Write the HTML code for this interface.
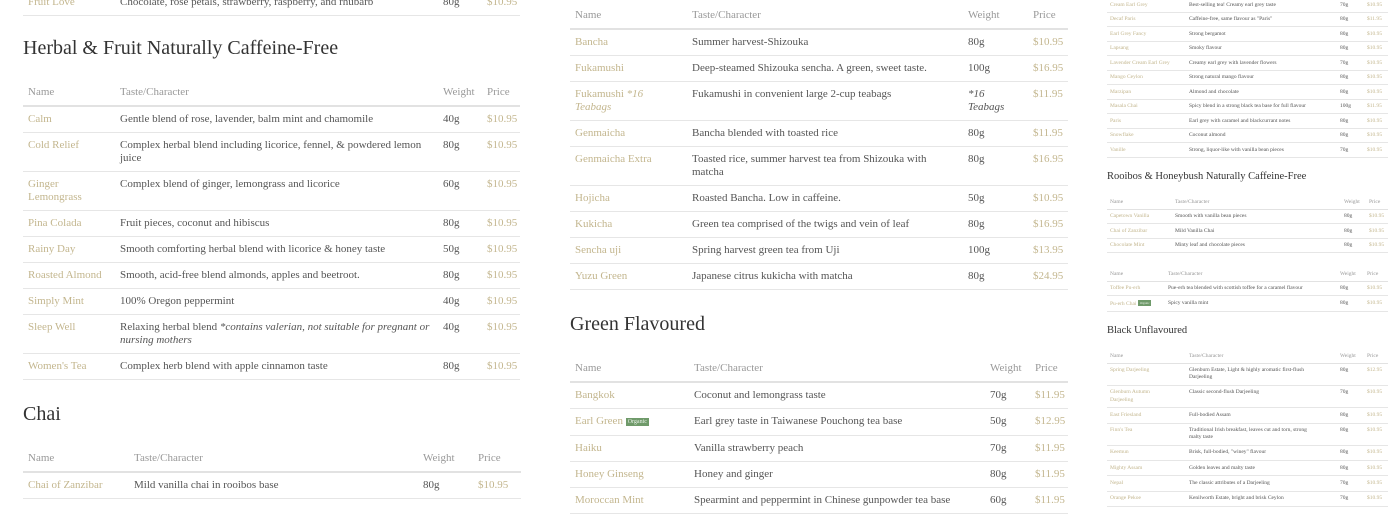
<!DOCTYPE html>
<html><head><meta charset="utf-8"><style>
*{margin:0;padding:0;box-sizing:border-box}
body{width:1400px;height:500px;overflow:hidden;background:#fff;font-family:"Liberation Serif",serif;color:#555;position:relative}
.t{position:absolute;border-collapse:collapse;table-layout:fixed;font-size:11px}
.t td,.t th{padding:6px 5px;line-height:13px;vertical-align:top;text-align:left;font-weight:normal;border-bottom:1px solid #e6e6e6;white-space:nowrap}
.t th{color:#999;border-bottom:2px solid #e2e2e2}
.t td.n,.t td.p{color:#c3b68e}
.h{position:absolute;font-size:20px;color:#333;font-weight:normal;white-space:nowrap}
.s{font-size:5.5px}
.s td,.s th{padding:3.5px 3px;line-height:6.5px;border-bottom-width:.5px}
.s th{border-bottom-width:1px}
.s2 td{line-height:7.2px}
.hs{font-size:10.5px}
.org{background:#6f9a6a;color:#e8f0e6;font-size:6px;padding:1px 2px;vertical-align:1px}
.s .org{font-size:3px}
</style></head><body>

<table class="t" style="left:23px;top:-10px;width:497px"><colgroup><col style="width:92px"><col style="width:323px"><col style="width:44px"><col style="width:38px"></colgroup>
<tr><td class="n">Fruit Love</td><td>Chocolate, rose petals, strawberry, raspberry, and rhubarb</td><td>80g</td><td class="p">$10.95</td></tr></table>

<div class="h" style="left:23px;top:37px">Herbal &amp; Fruit Naturally Caffeine-Free</div>
<table class="t" style="left:23px;top:80px;width:497px"><colgroup><col style="width:92px"><col style="width:323px"><col style="width:44px"><col style="width:38px"></colgroup>
<tr><th>Name</th><th>Taste/Character</th><th>Weight</th><th>Price</th></tr>
<tr><td class="n">Calm</td><td>Gentle blend of rose, lavender, balm mint and chamomile</td><td>40g</td><td class="p">$10.95</td></tr>
<tr><td class="n">Cold Relief</td><td>Complex herbal blend including licorice, fennel, &amp; powdered lemon<br>juice</td><td>80g</td><td class="p">$10.95</td></tr>
<tr><td class="n">Ginger<br>Lemongrass</td><td>Complex blend of ginger, lemongrass and licorice</td><td>60g</td><td class="p">$10.95</td></tr>
<tr><td class="n">Pina Colada</td><td>Fruit pieces, coconut and hibiscus</td><td>80g</td><td class="p">$10.95</td></tr>
<tr><td class="n">Rainy Day</td><td>Smooth comforting herbal blend with licorice &amp; honey taste</td><td>50g</td><td class="p">$10.95</td></tr>
<tr><td class="n">Roasted Almond</td><td>Smooth, acid-free blend almonds, apples and beetroot.</td><td>80g</td><td class="p">$10.95</td></tr>
<tr><td class="n">Simply Mint</td><td>100% Oregon peppermint</td><td>40g</td><td class="p">$10.95</td></tr>
<tr><td class="n">Sleep Well</td><td>Relaxing herbal blend <i>*contains valerian, not suitable for pregnant or<br>nursing mothers</i></td><td>40g</td><td class="p">$10.95</td></tr>
<tr><td class="n">Women's Tea</td><td>Complex herb blend with apple cinnamon taste</td><td>80g</td><td class="p">$10.95</td></tr>
</table>

<div class="h" style="left:23px;top:403px">Chai</div>
<table class="t" style="left:23px;top:446px;width:498px"><colgroup><col style="width:106px"><col style="width:289px"><col style="width:55px"><col style="width:48px"></colgroup>
<tr><th>Name</th><th>Taste/Character</th><th>Weight</th><th>Price</th></tr>
<tr><td class="n">Chai of Zanzibar</td><td>Mild vanilla chai in rooibos base</td><td>80g</td><td class="p">$10.95</td></tr>
</table>

<table class="t" style="left:570px;top:3px;width:498px"><colgroup><col style="width:117px"><col style="width:276px"><col style="width:65px"><col style="width:40px"></colgroup>
<tr><th>Name</th><th>Taste/Character</th><th>Weight</th><th>Price</th></tr>
<tr><td class="n">Bancha</td><td>Summer harvest-Shizouka</td><td>80g</td><td class="p">$10.95</td></tr>
<tr><td class="n">Fukamushi</td><td>Deep-steamed Shizouka sencha. A green, sweet taste.</td><td>100g</td><td class="p">$16.95</td></tr>
<tr><td class="n">Fukamushi <i>*16<br>Teabags</i></td><td>Fukamushi in convenient large 2-cup teabags</td><td><i>*16<br>Teabags</i></td><td class="p">$11.95</td></tr>
<tr><td class="n">Genmaicha</td><td>Bancha blended with toasted rice</td><td>80g</td><td class="p">$11.95</td></tr>
<tr><td class="n">Genmaicha Extra</td><td>Toasted rice, summer harvest tea from Shizouka with<br>matcha</td><td>80g</td><td class="p">$16.95</td></tr>
<tr><td class="n">Hojicha</td><td>Roasted Bancha. Low in caffeine.</td><td>50g</td><td class="p">$10.95</td></tr>
<tr><td class="n">Kukicha</td><td>Green tea comprised of the twigs and vein of leaf</td><td>80g</td><td class="p">$16.95</td></tr>
<tr><td class="n">Sencha uji</td><td>Spring harvest green tea from Uji</td><td>100g</td><td class="p">$13.95</td></tr>
<tr><td class="n">Yuzu Green</td><td>Japanese citrus kukicha with matcha</td><td>80g</td><td class="p">$24.95</td></tr>
</table>

<div class="h" style="left:570px;top:313px">Green Flavoured</div>
<table class="t" style="left:570px;top:356px;width:498px"><colgroup><col style="width:119px"><col style="width:296px"><col style="width:45px"><col style="width:38px"></colgroup>
<tr><th>Name</th><th>Taste/Character</th><th>Weight</th><th>Price</th></tr>
<tr><td class="n">Bangkok</td><td>Coconut and lemongrass taste</td><td>70g</td><td class="p">$11.95</td></tr>
<tr><td class="n">Earl Green <span class="org">Organic</span></td><td>Earl grey taste in Taiwanese Pouchong tea base</td><td>50g</td><td class="p">$12.95</td></tr>
<tr><td class="n">Haiku</td><td>Vanilla strawberry peach</td><td>70g</td><td class="p">$11.95</td></tr>
<tr><td class="n">Honey Ginseng</td><td>Honey and ginger</td><td>80g</td><td class="p">$11.95</td></tr>
<tr><td class="n">Moroccan Mint</td><td>Spearmint and peppermint in Chinese gunpowder tea base</td><td>60g</td><td class="p">$11.95</td></tr>
</table>

<table class="t s" style="left:1107px;top:-2px;width:281px"><colgroup><col style="width:79px"><col style="width:151px"><col style="width:27px"><col style="width:24px"></colgroup>
<tr><td class="n">Cream Earl Grey</td><td>Best-selling tea! Creamy earl grey taste</td><td>70g</td><td class="p">$10.95</td></tr>
<tr><td class="n">Decaf Paris</td><td>Caffeine-free, same flavour as "Paris"</td><td>80g</td><td class="p">$11.95</td></tr>
<tr><td class="n">Earl Grey Fancy</td><td>Strong bergamot</td><td>80g</td><td class="p">$10.95</td></tr>
<tr><td class="n">Lapsang</td><td>Smoky flavour</td><td>80g</td><td class="p">$10.95</td></tr>
<tr><td class="n">Lavender Cream Earl Grey</td><td>Creamy earl grey with lavender flowers</td><td>70g</td><td class="p">$10.95</td></tr>
<tr><td class="n">Mango Ceylon</td><td>Strong natural mango flavour</td><td>80g</td><td class="p">$10.95</td></tr>
<tr><td class="n">Marzipan</td><td>Almond and chocolate</td><td>80g</td><td class="p">$10.95</td></tr>
<tr><td class="n">Masala Chai</td><td>Spicy blend in a strong black tea base for full flavour</td><td>100g</td><td class="p">$11.95</td></tr>
<tr><td class="n">Paris</td><td>Earl grey with caramel and blackcurrant notes</td><td>80g</td><td class="p">$10.95</td></tr>
<tr><td class="n">Snowflake</td><td>Coconut almond</td><td>80g</td><td class="p">$10.95</td></tr>
<tr><td class="n">Vanille</td><td>Strong, liquor-like with vanilla bean pieces</td><td>70g</td><td class="p">$10.95</td></tr>
</table>

<div class="h hs" style="left:1107px;top:171px">Rooibos &amp; Honeybush Naturally Caffeine-Free</div>
<table class="t s" style="left:1107px;top:195px;width:281px"><colgroup><col style="width:65px"><col style="width:169px"><col style="width:25px"><col style="width:22px"></colgroup>
<tr><th>Name</th><th>Taste/Character</th><th>Weight</th><th>Price</th></tr>
<tr><td class="n">Capetown Vanilla</td><td>Smooth with vanilla bean pieces</td><td>80g</td><td class="p">$10.95</td></tr>
<tr><td class="n">Chai of Zanzibar</td><td>Mild Vanilla Chai</td><td>80g</td><td class="p">$10.95</td></tr>
<tr><td class="n">Chocolate Mint</td><td>Minty leaf and chocolate pieces</td><td>80g</td><td class="p">$10.95</td></tr>
</table>

<table class="t s" style="left:1107px;top:267px;width:281px"><colgroup><col style="width:58px"><col style="width:172px"><col style="width:27px"><col style="width:24px"></colgroup>
<tr><th>Name</th><th>Taste/Character</th><th>Weight</th><th>Price</th></tr>
<tr><td class="n">Toffee Pu-erh</td><td>Pue-erh tea blended with scottish toffee for a caramel flavour</td><td>80g</td><td class="p">$10.95</td></tr>
<tr><td class="n">Pu-erh Chai <span class="org">Organic</span></td><td>Spicy vanilla mint</td><td>80g</td><td class="p">$10.95</td></tr>
</table>

<div class="h hs" style="left:1107px;top:325px">Black Unflavoured</div>
<table class="t s s2" style="left:1107px;top:349px;width:281px"><colgroup><col style="width:79px"><col style="width:151px"><col style="width:27px"><col style="width:24px"></colgroup>
<tr><th>Name</th><th>Taste/Character</th><th>Weight</th><th>Price</th></tr>
<tr><td class="n">Spring Darjeeling</td><td>Glenburn Estate, Light &amp; highly aromatic first-flush<br>Darjeeling</td><td>80g</td><td class="p">$12.95</td></tr>
<tr><td class="n">Glenburn Autumn<br>Darjeeling</td><td>Classic second-flush Darjeeling</td><td>70g</td><td class="p">$10.95</td></tr>
<tr><td class="n">East Friesland</td><td>Full-bodied Assam</td><td>80g</td><td class="p">$10.95</td></tr>
<tr><td class="n">Finn's Tea</td><td>Traditional Irish breakfast, leaves cut and torn, strong<br>malty taste</td><td>80g</td><td class="p">$10.95</td></tr>
<tr><td class="n">Keemun</td><td>Brisk, full-bodied, "winey" flavour</td><td>80g</td><td class="p">$10.95</td></tr>
<tr><td class="n">Mighty Assam</td><td>Golden leaves and malty taste</td><td>80g</td><td class="p">$10.95</td></tr>
<tr><td class="n">Nepal</td><td>The classic attributes of a Darjeeling</td><td>70g</td><td class="p">$10.95</td></tr>
<tr><td class="n">Orange Pekoe</td><td>Kenilworth Estate, bright and brisk Ceylon</td><td>70g</td><td class="p">$10.95</td></tr>
</table>
</body></html>
